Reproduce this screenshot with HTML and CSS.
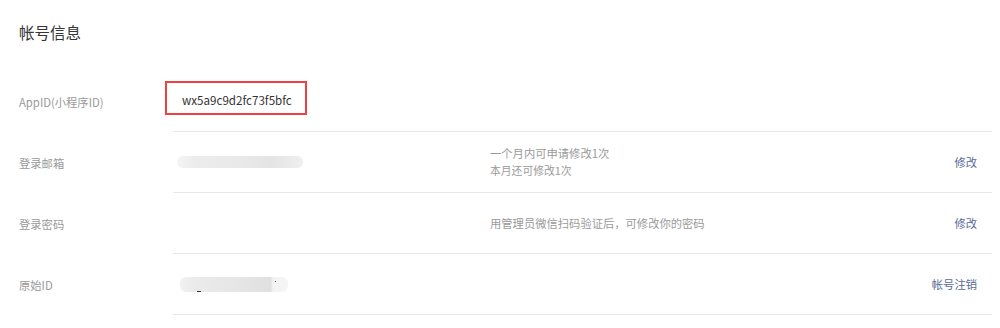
FILE: index.html
```html
<!DOCTYPE html>
<html lang="zh-CN">
<head>
<meta charset="utf-8">
<title>帐号信息</title>
<link rel="stylesheet" href="styles.css">
</head>
<body>
<div class="page">
  <h2 class="title">帐号信息</h2>
  <div class="row">
    <div class="label">AppID(小程序ID)</div>
    <div class="content first">
      <div class="value"><span class="appid">wx5a9c9d2fc73f5bfc</span></div>
      <div class="desc"></div>
      <div class="action"></div>
    </div>
  </div>
  <div class="row">
    <div class="label">登录邮箱</div>
    <div class="content">
      <div class="value"><div class="blur blur-email"></div></div>
      <div class="desc"><div class="desc-main">一个月内可申请修改1次</div><div class="desc-sub">本月还可修改1次</div></div>
      <div class="action"><a class="link">修改</a></div>
    </div>
  </div>
  <div class="row">
    <div class="label">登录密码</div>
    <div class="content">
      <div class="value"></div>
      <div class="desc">用管理员微信扫码验证后，可修改你的密码</div>
      <div class="action"><a class="link">修改</a></div>
    </div>
  </div>
  <div class="row">
    <div class="label">原始ID</div>
    <div class="content">
      <div class="value"><div class="blur blur-id"><span class="mark"></span><span class="dot"></span></div></div>
      <div class="desc"></div>
      <div class="action"><a class="link">帐号注销</a></div>
    </div>
  </div>
</div>
</body>
</html>
```
FILE: styles.css
```css
html, body {
  margin: 0;
  padding: 0;
  background: #ffffff;
}
body {
  font-family: "Noto Sans CJK SC", "Noto Sans", sans-serif;
  color: #333;
}
.page {
  padding-left: 19px;
  width: 973px;
}
.title {
  margin: 0;
  box-sizing: border-box;
  height: 71px;
  padding-top: 22px;
  font-size: 15.5px;
  line-height: 20px;
  font-weight: normal;
  color: #353535;
}
.row {
  display: flex;
  height: 61px;
}
.label {
  width: 154px;
  flex: none;
  display: flex;
  align-items: center;
  font-size: 11.3px;
  color: #999;
  padding-top: 1px;
}
.content {
  flex: 1;
  display: flex;
  align-items: center;
  border-bottom: 1px solid #e7e7e7;
  box-sizing: border-box;
}
.value {
  width: 317px;
  flex: none;
  display: flex;
  align-items: center;
}
.desc {
  flex: 1;
  font-size: 11.3px;
  color: #9a9a9a;
  line-height: 17px;
}
.desc-sub {
  font-size: 10.8px;
}
.action {
  padding-right: 15px;
  font-size: 11.3px;
}
.link {
  color: #576b95;
  text-decoration: none;
}
.appid {
  display: inline-block;
  box-sizing: border-box;
  width: 142px;
  height: 34px;
  margin-left: -8px;
  margin-bottom: 6px;
  padding: 7px 0 0 15px;
  border: 2px solid #f04141;
  font-size: 11.6px;
  line-height: 20px;
  color: #333;
}
.blur {
  position: relative;
  border-radius: 6px;
}
.blur-email {
  margin-left: 4px;
  width: 126px;
  height: 12px;
  background: linear-gradient(90deg, #f4f4f4 0%, #ececec 15%, #e9e9e9 50%, #e4e4e4 75%, #efefef 100%);
}
.blur-id {
  margin-left: 7px;
  width: 108px;
  height: 15px;
  margin-top: 1px;
  background: linear-gradient(90deg, #f2f2f2 0%, #ebebeb 12%, #e6e6e6 50%, #e0e0e0 84%, #f3f3f3 86%, #f5f5f5 100%);
}
.mark {
  position: absolute;
  left: 17px;
  top: 14px;
  width: 4px;
  height: 1px;
  background: #333;
}
.dot {
  position: absolute;
  left: 95px;
  top: 4px;
  width: 1px;
  height: 1px;
  background: #555;
}
```
